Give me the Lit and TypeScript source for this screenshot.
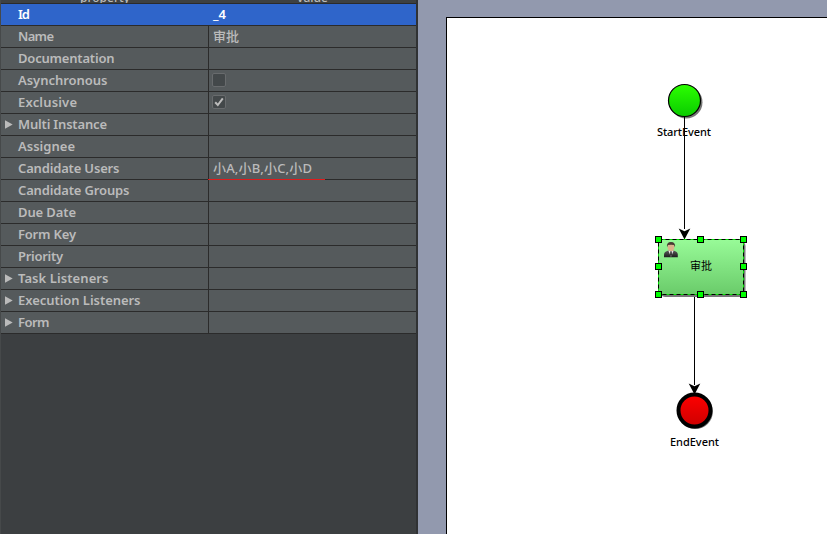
import { LitElement, html, css, svg, nothing } from "lit";
import { customElement } from "lit/decorators.js";
import { classMap } from "lit/directives/class-map.js";

interface Row {
  name: string;
  value?: string;
  check?: boolean;
  group?: boolean;
  selected?: boolean;
  invalid?: boolean;
  width: number;
}

const rows: Row[] = [
  { name: "Id", value: "_4", selected: true, width: 12 },
  { name: "Name", value: "审批", width: 36 },
  { name: "Documentation", width: 96.5 },
  { name: "Asynchronous", check: false, width: 89.5 },
  { name: "Exclusive", check: true, width: 59 },
  { name: "Multi Instance", group: true, width: 89 },
  { name: "Assignee", width: 57 },
  { name: "Candidate Users", value: "小A,小B,小C,小D", invalid: true, width: 101.5 },
  { name: "Candidate Groups", width: 111.5 },
  { name: "Due Date", width: 58 },
  { name: "Form Key", width: 58 },
  { name: "Priority", width: 45 },
  { name: "Task Listeners", group: true, width: 90.5 },
  { name: "Execution Listeners", group: true, width: 122.5 },
  { name: "Form", group: true, width: 31.5 },
];

@customElement("property-table")
export class PropertyTable extends LitElement {
  static styles = css`
    :host {
      display: block;
      box-sizing: border-box;
      width: 418px;
      height: 534px;
      overflow: hidden;
      background: #3c3f41;
      border-left: 1px solid #46494a;
      border-right: 2px solid #303234;
      font: 600 13px/21px "Noto Sans", "Noto Sans CJK SC", sans-serif;
      color: #bbbbbb;
    }
    .head {
      display: grid;
      grid-template-columns: 208px 1fr;
      height: 4px;
      box-sizing: border-box;
      border-bottom: 1px solid #2b2b2b;
      overflow: hidden;
      text-align: center;
      line-height: 18px;
      font-size: 12px;
      font-weight: 500;
      background: #3e4142;
    }
    .head span { margin-top: -11px; }
    .row {
      display: grid;
      grid-template-columns: 207px 1fr;
      height: 22px;
      box-sizing: border-box;
      border-bottom: 1px solid #2b2b2b;
      background: #555a5c;
    }
    .selected { background: #2f65ca; color: #fff; }
    .name { display: flex; align-items: center; }
    .twist { width: 17px; height: 21px; flex: none; fill: #bbb; }
    .label { width: 180px; height: 21px; overflow: visible; fill: currentColor; }
    .value {
      position: relative;
      border-left: 1px solid #2b2b2b;
      padding-left: 4px;
      display: flex;
      align-items: center;
      font-weight: 500;
      font-size: 13px;
    }
    .selected .value { border-left-color: #2f65ca; font-weight: 600; }
    .invalid::after {
      content: "";
      position: absolute;
      left: -1px;
      top: 21px;
      width: 117px;
      height: 1px;
      background: #e01b1b;
      z-index: 1;
    }
    .check { width: 14px; height: 14px; margin-left: -1px; margin-top: -1px; }
  `;

  render() {
    return html`
      <div class="head"><span>property</span><span>value</span></div>
      ${rows.map(
        (r) => html`
          <div class=${classMap({ row: true, selected: !!r.selected })}>
            <div class="name">
              <svg class="twist" viewBox="0 0 17 21">
                ${r.group ? svg`<path d="M4 6.3L11.7 10.5L4 14.7Z" />` : nothing}
              </svg>
              <svg class="label">
                <text x="0" y="15" textLength=${r.width}>${r.name}</text>
              </svg>
            </div>
            <div class=${classMap({ value: true, invalid: !!r.invalid })}>
              ${r.check === undefined
                ? r.value && r.value.length > 2
                  ? html`<svg class="label"><text x="0" y="15" textLength="99">${r.value}</text></svg>`
                  : r.value ?? nothing
                : html`<svg class="check" viewBox="0 0 14 14">
                    <rect x=".5" y=".5" width="13" height="13" rx="1.5" fill="#43484a" stroke="#686b6d" />
                    ${r.check
                      ? svg`<path d="M3.2 7.2L5.8 10L10.8 3.3" fill="none" stroke="#bbb" stroke-width="2" />`
                      : nothing}
                  </svg>`}
            </div>
          </div>
        `
      )}
    `;
  }
}

@customElement("flow-canvas")
export class FlowCanvas extends LitElement {
  static styles = css`
    :host {
      display: block;
      box-sizing: border-box;
      flex: 1;
      height: 534px;
      padding: 17px 0 0 28px;
      background: #9299ae;
      overflow: hidden;
    }
    .sheet {
      box-sizing: border-box;
      height: 517px;
      border: 1px solid #000;
      border-width: 1px 0 0 1px;
      background: #fff;
    }
    .diagram { display: block; width: 380px; height: 516px; }
    .text {
      font: 500 11px "Noto Sans", "Noto Sans CJK SC", sans-serif;
      text-anchor: middle;
      fill: #000;
    }
    .task { font-weight: 400; }
  `;

  render() {
    const handles = [
      [655, 236], [697, 236], [740, 236],
      [655, 263], [740, 263],
      [655, 291], [697, 291], [740, 291],
    ];
    return html`
      <div class="sheet">
        <svg class="diagram" viewBox="447 18 380 516">
          <defs>
            <linearGradient id="start" x2="0" y2="1">
              <stop stop-color="#2cff00" /><stop offset="1" stop-color="#0acb00" />
            </linearGradient>
            <linearGradient id="task" x2="0" y2="1">
              <stop stop-color="#98fb98" /><stop offset="1" stop-color="#6acb6a" />
            </linearGradient>
            <linearGradient id="end" x2="0" y2="1">
              <stop stop-color="#ff0000" /><stop offset="1" stop-color="#cd0000" />
            </linearGradient>
            <linearGradient id="suit" x2="0" y2="1">
              <stop stop-color="#5a5a5a" /><stop offset="1" stop-color="#1c1c1c" />
            </linearGradient>
          </defs>

          <circle cx="686.2" cy="102.2" r="16.3" fill="#777" />
          <circle cx="684.5" cy="100.5" r="16" fill="url(#start)" stroke="#000" stroke-width="1.2" />
          <path d="M684.5 117V229" stroke="#000" />
          <path d="M678.7 228.6L684.5 231.3L690.3 228.6L684.5 239.5Z" />
          <text class="text" x="684" y="136" textLength="54">StartEvent</text>

          <rect x="660" y="241" width="85.5" height="56" rx="5" fill="#777" />
          <rect x="658.5" y="239.5" width="85" height="55" rx="5" fill="url(#task)" />
          <rect x="658.5" y="239.5" width="85" height="55" fill="none" stroke="#00e000" />
          <rect x="658.5" y="239.5" width="85" height="55" fill="none" stroke="#000" stroke-dasharray="4 3" />
          <g>
            <path d="M664 257.3V254.5Q664.2 251.7 668.5 250.6H673.5Q677.6 251.7 677.8 254.5V257.3Z" fill="url(#suit)" />
            <path d="M668.3 250.4H673.7L671 257Z" fill="#e8e8e8" />
            <path d="M670.3 251.3H671.7L672 255L671 257L670 255Z" fill="#333" />
            <ellipse cx="671" cy="247.2" rx="3.3" ry="3.9" fill="#dcb28c" />
            <path d="M667 247.2Q666.2 242 671 241.9Q675.8 242 675 247.2L674 245Q671 244.5 668 245Z" fill="#4a3c34" />
          </g>
          <text class="text task" x="701" y="270">审批</text>
          ${handles.map(
            ([x, y]) => svg`<rect x=${x + 0.5} y=${y + 0.5} width="6" height="6" fill="#00ff00" stroke="#000" />`
          )}

          <path d="M694.5 297V385" stroke="#000" />
          <circle cx="695.4" cy="411.6" r="17.5" fill="#777" />
          <circle cx="694.5" cy="410.5" r="16" fill="url(#end)" stroke="#000" stroke-width="4" />
          <path d="M688.7 383.6L694.5 386.3L700.3 383.6L694.5 394.5Z" />
          <text class="text" x="694.5" y="446" textLength="49">EndEvent</text>
        </svg>
      </div>
    `;
  }
}

@customElement("app-root")
export class AppRoot extends LitElement {
  static styles = css`
    :host {
      display: flex;
      width: 827px;
      height: 534px;
      overflow: hidden;
    }
  `;

  render() {
    return html`<property-table></property-table><flow-canvas></flow-canvas>`;
  }
}
